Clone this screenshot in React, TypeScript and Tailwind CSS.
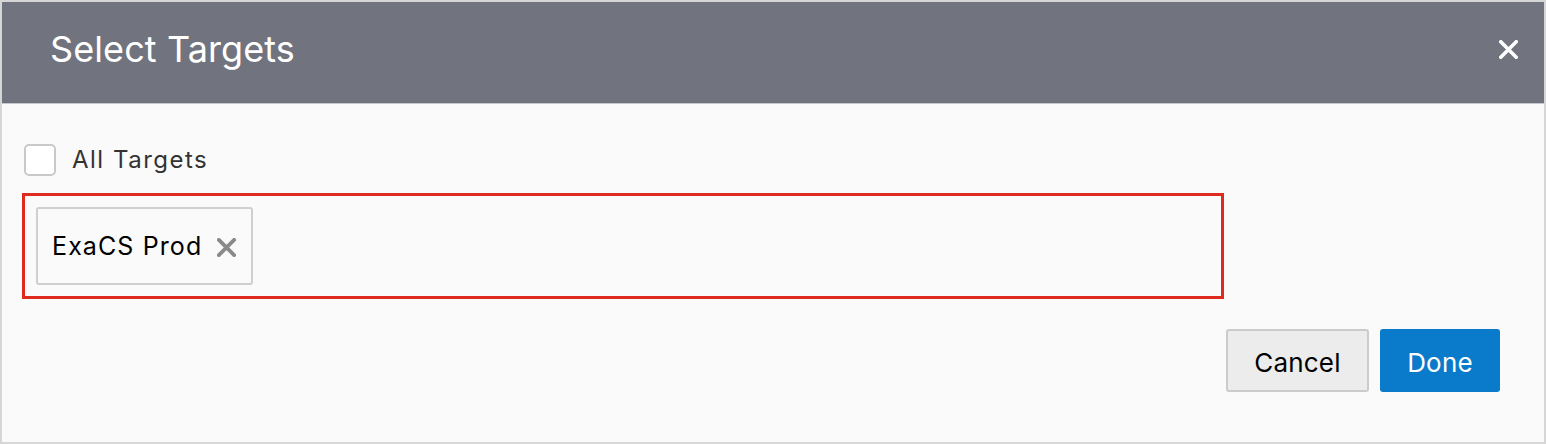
function Cross({ size, stroke, className }: { size: number; stroke: number; className: string }) {
  const p = stroke / 2
  return (
    <svg width={size} height={size} viewBox={`0 0 ${size} ${size}`} className={className}>
      <path d={`M${p} ${p} L${size - p} ${size - p} M${size - p} ${p} L${p} ${size - p}`} stroke="currentColor" strokeWidth={stroke} strokeLinecap="square" fill="none" />
    </svg>
  )
}

export default function App() {
  return (
    <div className="w-[1546px] h-[444px] bg-[#d6d6d6] p-[2px] font-['Inter',sans-serif]">
      <div className="flex flex-col h-full bg-[#fafafa]">
        {/* Header */}
        <div className="flex items-center justify-between h-[102px] bg-[#71747e] border-b border-[#c8c8cc] pl-[48px] pr-[26px]">
          <h1 className="text-[36px] text-white leading-none tracking-[0.1px] -mt-[8px]">Select Targets</h1>
          <Cross size={19} stroke={3.6} className="text-white -mt-[7px]" />
        </div>

        {/* Body */}
        <div className="flex flex-col pl-[20px] pr-[44px] pt-[40px]">
          <label className="flex items-center gap-[16px] pl-[2px]">
            <span className="w-[32px] h-[32px] rounded-[5px] border-2 border-[#c9c9c9] bg-white" />
            <span className="text-[24px] text-[#333] leading-none tracking-[1.5px]">All Targets</span>
          </label>

          <div className="mt-[17px] w-[1202px] h-[106px] border-[3px] border-[#df2a1e] p-[11px]">
            <div className="flex items-center h-[78px] w-[217px] border-2 border-[#cfcfcf] rounded-[3px] bg-[#fafafa] pl-[14px] gap-[15px]">
              <span className="text-[25px] text-black leading-none tracking-[1.1px]">ExaCS Prod</span>
              <Cross size={19} stroke={3.8} className="text-[#8a8a8a] mt-[2px]" />
            </div>
          </div>

          <div className="flex justify-end gap-[11px] mt-[30px]">
            <button className="w-[143px] h-[63px] bg-[#ececec] border-2 border-[#cbcbcb] rounded-[3px] text-[26px] text-black tracking-[0.2px] pt-[3px]">Cancel</button>
            <button className="w-[120px] h-[63px] bg-[#0a7acb] rounded-[3px] text-[26px] text-white tracking-[0.2px] pt-[3px]">Done</button>
          </div>
        </div>
      </div>
    </div>
  )
}
